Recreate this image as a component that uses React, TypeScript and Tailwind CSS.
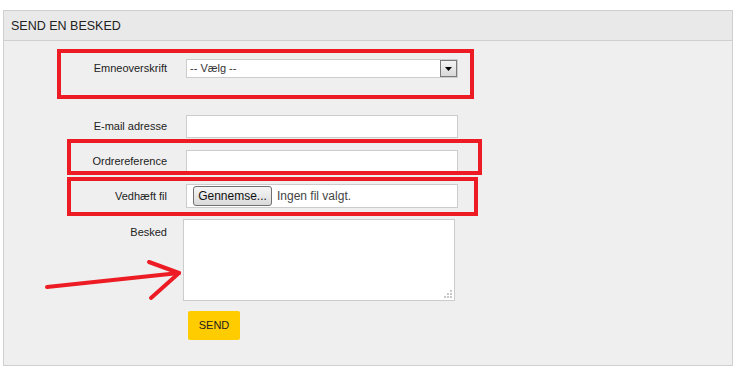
import React from "react";

const font = { fontFamily: '"Liberation Sans", Arial, sans-serif' };

function Label({ children, top = false }: { children: React.ReactNode; top?: boolean }) {
  return (
    <div className={`w-[163px] shrink-0 text-right text-[11px] text-[#222] ${top ? "pt-[5px]" : ""}`}>{children}</div>
  );
}

export default function App() {
  return (
    <div className="relative w-[740px] h-[375px] bg-white pt-[10px] pl-[3px]" style={font}>
      <div className="w-[730px] h-[356px] border border-[#d0d0d0] bg-[#efefef] flex flex-col">
        <div className="h-[30px] bg-[#e9e9e9] border-b border-[#d0d0d0] flex items-center pl-[7px] pt-[2px] text-[12.5px] text-[#222]">
          SEND EN BESKED
        </div>
        <div className="flex flex-col pt-[18px]">
          {/* Select */}
          <div className="flex items-center">
            <Label>Emneoverskrift</Label>
            <div className="ml-[19px] w-[272px] h-[19px] bg-white border border-[#cccccc] flex items-center">
              <span className="flex-1 pl-[3px] text-[11px] text-[#333]">-- Vælg --</span>
              <div className="w-[17px] h-[17px] border border-[#7a7a7a] bg-gradient-to-b from-[#f4f4f4] to-[#d8d8d8] flex items-center justify-center">
                <svg width="7" height="4" viewBox="0 0 7 4">
                  <path d="M0 0h7L3.5 4z" fill="#000" />
                </svg>
              </div>
            </div>
          </div>
          {/* Email */}
          <div className="flex items-center mt-[37px]">
            <Label>E-mail adresse</Label>
            <div className="ml-[19px] w-[272px] h-[23px] bg-white border border-[#cccccc]" />
          </div>
          {/* Ordrereference */}
          <div className="flex items-center mt-[12px]">
            <Label>Ordrereference</Label>
            <div className="ml-[19px] w-[272px] h-[22px] bg-white border border-[#cccccc]" />
          </div>
          {/* File */}
          <div className="flex items-center mt-[12px]">
            <Label>Vedhæft fil</Label>
            <div className="ml-[19px] w-[272px] h-[24px] bg-white border border-[#cccccc] flex items-center pl-[6px]">
              <div className="h-[20px] w-[79px] rounded-[3px] border border-[#707070] bg-gradient-to-b from-[#f6f6f6] to-[#dadada] flex items-center justify-center text-[12px] text-[#111]">
                Gennemse...
              </div>
              <span className="ml-[5px] text-[12px] text-[#444]">Ingen fil valgt.</span>
            </div>
          </div>
          {/* Besked */}
          <div className="flex items-start mt-[11px]">
            <Label top>Besked</Label>
            <div className="relative ml-[16px] w-[272px] h-[82px] bg-white border border-[#cccccc]">
              <svg className="absolute right-[1px] bottom-[1px]" width="11" height="11" viewBox="0 0 11 11">
                <rect x="8" y="2" width="2" height="2" fill="#c8c8c8" />
                <rect x="5" y="5" width="2" height="2" fill="#c8c8c8" />
                <rect x="8" y="5" width="2" height="2" fill="#c8c8c8" />
                <rect x="2" y="8" width="2" height="2" fill="#c8c8c8" />
                <rect x="5" y="8" width="2" height="2" fill="#c8c8c8" />
                <rect x="8" y="8" width="2" height="2" fill="#c8c8c8" />
              </svg>
            </div>
          </div>
          {/* Send */}
          <div className="flex mt-[10px]">
            <div className="w-[163px] shrink-0" />
            <div className="ml-[21px] w-[52px] h-[29px] rounded-[2px] bg-[#ffcc00] flex items-center justify-center text-[11px] text-[#222]">
              SEND
            </div>
          </div>
        </div>
      </div>

      {/* Annotation overlays */}
      <div className="absolute left-[57px] top-[49px] w-[417px] h-[50px] border-4 border-[#ed1c24]" />
      <div className="absolute left-[67px] top-[139px] w-[415px] h-[36px] border-4 border-[#ed1c24]" />
      <div className="absolute left-[67px] top-[177px] w-[411px] h-[39px] border-4 border-[#ed1c24]" />
      <svg className="absolute left-0 top-0" width="740" height="375" viewBox="0 0 740 375">
        <g stroke="#ed1c24" strokeWidth="4" strokeLinecap="round" strokeLinejoin="round" fill="none">
          <path d="M47 287 L179 273" />
          <path d="M149 262 L179 273 L151 298" />
        </g>
      </svg>
    </div>
  );
}
